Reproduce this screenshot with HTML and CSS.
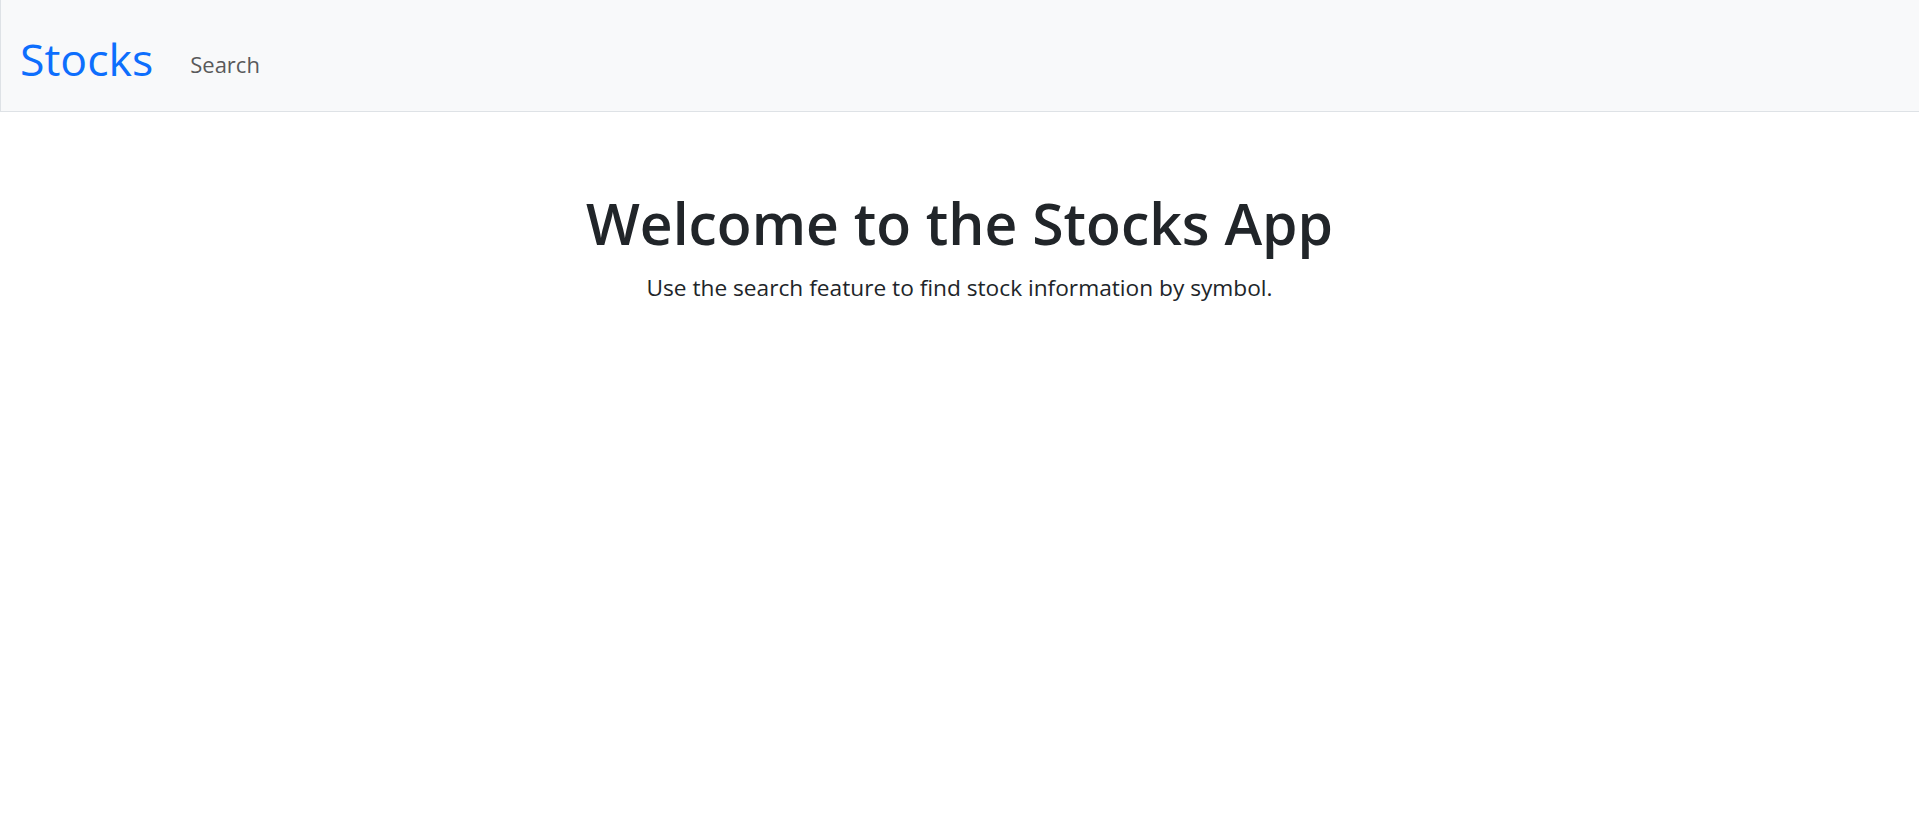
FILE: index.html
```html
<!DOCTYPE html>
<html lang="en">
<head>
<meta charset="utf-8">
<title>Stocks</title>
<link rel="stylesheet" href="styles.css">
</head>
<body>
<nav class="navbar">
  <a class="brand" href="#">Stocks</a>
  <a class="nav-link" href="#">Search</a>
</nav>
<main class="hero">
  <h1 class="title">Welcome to the Stocks App</h1>
  <p class="lead">Use the search feature to find stock information by symbol.</p>
</main>
</body>
</html>
```
FILE: styles.css
```css
* { box-sizing: border-box; }
html, body { margin: 0; padding: 0; }
body {
  font-family: "Open Sans", "Noto Sans", sans-serif;
  color: #212529;
  background: #fff;
}
.navbar {
  display: flex;
  align-items: flex-start;
  height: 112px;
  padding: 0 0 0 19px;
  background: #f8f9fa;
  border-left: 1px solid #dee2e6;
  border-bottom: 1px solid #dee2e6;
}
.brand {
  margin-top: 37px;
  margin-right: 37px;
  font-size: 44.6px;
  line-height: 1;
  color: #0d6efd;
  text-decoration: none;
}
.nav-link {
  margin-top: 53px;
  font-size: 22px;
  line-height: 1;
  color: #59595a;
  text-decoration: none;
}
.hero {
  text-align: center;
  padding-top: 77px;
}
.title {
  margin: 0;
  font-size: 57px;
  font-weight: 600;
  line-height: 1.2;
}
.lead {
  margin: 14px 0 0;
  font-size: 22.7px;
  line-height: 1.5;
}
```
